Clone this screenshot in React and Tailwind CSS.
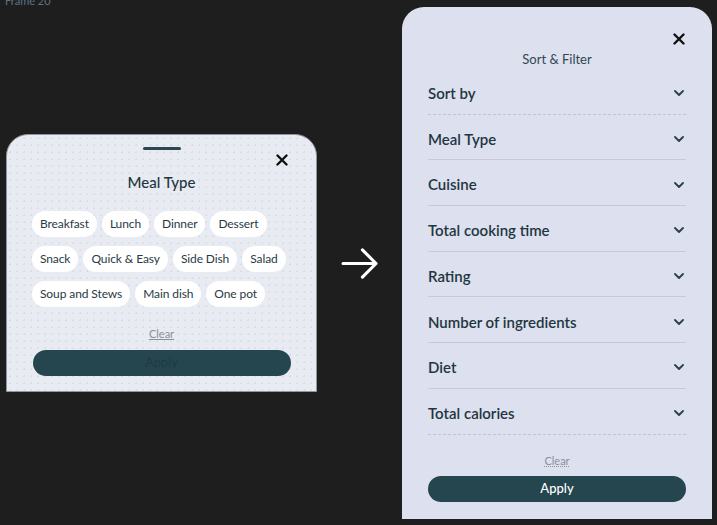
import React from "react";

const MEAL_TYPES = [
  ["Breakfast", "Lunch", "Dinner", "Dessert"],
  ["Snack", "Quick & Easy", "Side Dish", "Salad"],
  ["Soup and Stews", "Main dish", "One pot"],
];

const FILTERS = [
  "Sort by",
  "Meal Type",
  "Cuisine",
  "Total cooking time",
  "Rating",
  "Number of ingredients",
  "Diet",
  "Total calories",
];

function CloseIcon({ className = "" }) {
  return (
    <svg viewBox="0 0 12 12" className={className} fill="none" stroke="currentColor" strokeWidth="2.4" strokeLinecap="round">
      <path d="M1.5 1.5l9 9M10.5 1.5l-9 9" />
    </svg>
  );
}

function Chevron() {
  return (
    <svg viewBox="0 0 10 6" className="w-[10px] h-[6px] text-[#2b3f48]" fill="none" stroke="currentColor" strokeWidth="1.8" strokeLinecap="round" strokeLinejoin="round">
      <path d="M1 1l4 4 4-4" />
    </svg>
  );
}

function MealTypeSheet() {
  return (
    <div className="relative mt-[134px] ml-[6px] w-[311px] h-[258px] shrink-0 rounded-t-[22px] border border-[#8d979f] bg-[#e8ebf2] bg-[radial-gradient(#d9dce5_1px,transparent_1px)] bg-[size:7px_7px] flex flex-col items-center">
      <div className="mt-[12px] w-[38px] h-[3px] rounded-full bg-[#2d4651]" />
      <button className="absolute right-[28px] top-[19px] text-[#111]">
        <CloseIcon className="w-[12px] h-[12px]" />
      </button>
      <h2 className="mt-[22px] text-[15px] leading-[20px] font-medium text-[#22363f]">Meal Type</h2>
      <div className="mt-[19px] w-full px-[25px] flex flex-col gap-[9px]">
        {MEAL_TYPES.map((row, i) => (
          <div key={i} className="flex gap-[5px]">
            {row.map((t) => (
              <span key={t} className="h-[26px] px-[8px] rounded-full bg-white flex items-center text-[12px] tracking-[-0.1px] text-[#2a3a44]">
                {t}
              </span>
            ))}
          </div>
        ))}
      </div>
      <a className="mt-[20px] text-[11px] leading-[14px] text-[#8a9199] underline">Clear</a>
      <button className="mt-[9px] w-[258px] h-[26px] rounded-full bg-[#25464f] text-[13px] text-[#1f3a44]">Apply</button>
    </div>
  );
}

function SortFilterPanel() {
  return (
    <div className="relative mt-[7px] ml-[22px] w-[310px] h-[512px] shrink-0 rounded-t-[22px] bg-[#dce0ef] flex flex-col items-center px-[26px]">
      <button className="absolute right-[27px] top-[26px] text-[#111]">
        <CloseIcon className="w-[12px] h-[12px]" />
      </button>
      <h2 className="mt-[44px] text-[13px] leading-[16px] text-[#33474f]">Sort &amp; Filter</h2>
      <div className="mt-[2px] w-full flex flex-col">
        {FILTERS.map((f, i) => (
          <div
            key={f}
            className={`h-[45.7px] pt-[4px] flex items-center justify-between border-b ${
              i === 0 || i === FILTERS.length - 1 ? "border-dashed border-[#bfc3d4]" : "border-[#c6c9da]"
            }`}
          >
            <span className="text-[15px] font-semibold text-[#1f3640]">{f}</span>
            <span className="mr-[2px]">
              <Chevron />
            </span>
          </div>
        ))}
      </div>
      <a className="mt-[19px] text-[11px] leading-[14px] text-[#8a9199] underline decoration-dotted">Clear</a>
      <button className="mt-[8px] w-full h-[26px] rounded-full bg-[#25464f] text-[13px] font-medium text-white">Apply</button>
    </div>
  );
}

export default function App() {
  return (
    <div className="relative w-[717px] h-[525px] overflow-hidden bg-[#1e1e1e] font-['Lato',sans-serif] flex items-start">
      {/* canvas label */}
      <span className="absolute left-[5px] top-[-6px] text-[11px] leading-[14px] text-[#5d7384]">Frame 20</span>

      <MealTypeSheet />

      <svg viewBox="0 0 40 34" className="mt-[247px] ml-[24px] w-[39px] h-[33px] shrink-0 text-white" fill="none" stroke="currentColor" strokeWidth="3.2" strokeLinecap="round" strokeLinejoin="round">
        <path d="M2 17h34M22 3l14 14-14 14" />
      </svg>

      <SortFilterPanel />
    </div>
  );
}
